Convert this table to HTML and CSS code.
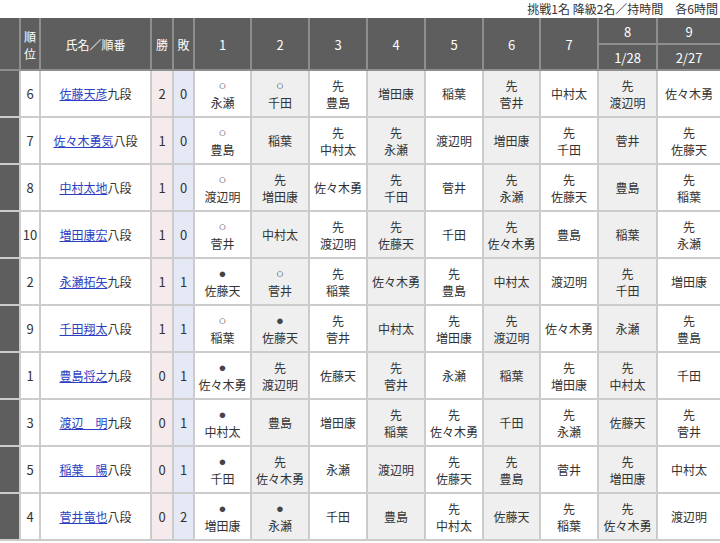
FILE: index.html
```html
<!DOCTYPE html>
<html lang="ja">
<head>
<meta charset="utf-8">
<link rel="stylesheet" href="styles.css">
</head>
<body>
<div class="note">挑戦1名 降級2名／持時間　各6時間</div>
<table class="league">
<colgroup>
<col class="c-side"><col class="c-rank"><col class="c-name"><col class="c-win"><col class="c-loss">
<col class="c-g57"><col class="c-g58"><col class="c-g58"><col class="c-g58"><col class="c-g58"><col class="c-g57"><col class="c-g58"><col class="c-g59"><col class="c-g9">
</colgroup>
<thead>
<tr class="h1">
<th rowspan="2" class="side"></th>
<th rowspan="2">順位</th>
<th rowspan="2">氏名／順番</th>
<th rowspan="2">勝</th>
<th rowspan="2">敗</th>
<th rowspan="2" class="num">1</th><th rowspan="2" class="num">2</th><th rowspan="2" class="num">3</th><th rowspan="2" class="num">4</th><th rowspan="2" class="num">5</th><th rowspan="2" class="num">6</th><th rowspan="2" class="num">7</th>
<th class="top num">8</th><th class="top num last">9</th>
</tr>
<tr class="h2"><th class="bot num">1/28</th><th class="bot num last">2/27</th></tr>
</thead>
<tbody>
<tr><td class="side"></td><td class="rank">6</td><td class="name"><a href="#">佐藤天彦</a>九段</td><td class="win">2</td><td class="loss">0</td>
<td><span class="mk">○</span><br>永瀬</td><td class="alt"><span class="mk">○</span><br>千田</td><td>先<br>豊島</td><td class="alt">増田康</td><td>稲葉</td><td class="alt">先<br>菅井</td><td>中村太</td><td class="alt">先<br>渡辺明</td><td class="last">佐々木勇</td></tr>
<tr><td class="side"></td><td class="rank">7</td><td class="name"><a href="#">佐々木勇気</a>八段</td><td class="win">1</td><td class="loss">0</td>
<td><span class="mk">○</span><br>豊島</td><td class="alt">稲葉</td><td>先<br>中村太</td><td class="alt">先<br>永瀬</td><td>渡辺明</td><td class="alt">増田康</td><td>先<br>千田</td><td class="alt">菅井</td><td class="last">先<br>佐藤天</td></tr>
<tr><td class="side"></td><td class="rank">8</td><td class="name"><a href="#">中村太地</a>八段</td><td class="win">1</td><td class="loss">0</td>
<td><span class="mk">○</span><br>渡辺明</td><td class="alt">先<br>増田康</td><td>佐々木勇</td><td class="alt">先<br>千田</td><td>菅井</td><td class="alt">先<br>永瀬</td><td>先<br>佐藤天</td><td class="alt">豊島</td><td class="last">先<br>稲葉</td></tr>
<tr><td class="side"></td><td class="rank">10</td><td class="name"><a href="#">増田康宏</a>八段</td><td class="win">1</td><td class="loss">0</td>
<td><span class="mk">○</span><br>菅井</td><td class="alt">中村太</td><td>先<br>渡辺明</td><td class="alt">先<br>佐藤天</td><td>千田</td><td class="alt">先<br>佐々木勇</td><td>豊島</td><td class="alt">稲葉</td><td class="last">先<br>永瀬</td></tr>
<tr><td class="side"></td><td class="rank">2</td><td class="name"><a href="#">永瀬拓矢</a>九段</td><td class="win">1</td><td class="loss">1</td>
<td><span class="mk">●</span><br>佐藤天</td><td class="alt"><span class="mk">○</span><br>菅井</td><td>先<br>稲葉</td><td class="alt">佐々木勇</td><td>先<br>豊島</td><td class="alt">中村太</td><td>渡辺明</td><td class="alt">先<br>千田</td><td class="last">増田康</td></tr>
<tr><td class="side"></td><td class="rank">9</td><td class="name"><a href="#">千田翔太</a>八段</td><td class="win">1</td><td class="loss">1</td>
<td><span class="mk">○</span><br>稲葉</td><td class="alt"><span class="mk">●</span><br>佐藤天</td><td>先<br>菅井</td><td class="alt">中村太</td><td>先<br>増田康</td><td class="alt">先<br>渡辺明</td><td>佐々木勇</td><td class="alt">永瀬</td><td class="last">先<br>豊島</td></tr>
<tr><td class="side"></td><td class="rank">1</td><td class="name"><a href="#">豊島将之</a>九段</td><td class="win">0</td><td class="loss">1</td>
<td><span class="mk">●</span><br>佐々木勇</td><td class="alt">先<br>渡辺明</td><td>佐藤天</td><td class="alt">先<br>菅井</td><td>永瀬</td><td class="alt">稲葉</td><td>先<br>増田康</td><td class="alt">先<br>中村太</td><td class="last">千田</td></tr>
<tr><td class="side"></td><td class="rank">3</td><td class="name"><a href="#">渡辺　明</a>九段</td><td class="win">0</td><td class="loss">1</td>
<td><span class="mk">●</span><br>中村太</td><td class="alt">豊島</td><td>増田康</td><td class="alt">先<br>稲葉</td><td>先<br>佐々木勇</td><td class="alt">千田</td><td>先<br>永瀬</td><td class="alt">佐藤天</td><td class="last">先<br>菅井</td></tr>
<tr><td class="side"></td><td class="rank">5</td><td class="name"><a href="#">稲葉　陽</a>八段</td><td class="win">0</td><td class="loss">1</td>
<td><span class="mk">●</span><br>千田</td><td class="alt">先<br>佐々木勇</td><td>永瀬</td><td class="alt">渡辺明</td><td>先<br>佐藤天</td><td class="alt">先<br>豊島</td><td>菅井</td><td class="alt">先<br>増田康</td><td class="last">中村太</td></tr>
<tr><td class="side"></td><td class="rank">4</td><td class="name"><a href="#">菅井竜也</a>八段</td><td class="win">0</td><td class="loss">2</td>
<td><span class="mk">●</span><br>増田康</td><td class="alt"><span class="mk">●</span><br>永瀬</td><td>千田</td><td class="alt">豊島</td><td>先<br>中村太</td><td class="alt">佐藤天</td><td>先<br>稲葉</td><td class="alt">先<br>佐々木勇</td><td class="last">渡辺明</td></tr>
</tbody>
</table>
</body>
</html>
```
FILE: styles.css
```css
html, body {
  margin: 0;
  padding: 0;
  background: #ffffff;
}
body {
  font-family: "Noto Sans CJK JP", "Noto Sans", sans-serif;
  font-size: 12px;
  color: #333333;
  width: 720px;
  overflow: hidden;
}
.note {
  height: 18px;
  line-height: 17px;
  text-align: right;
  padding-right: 2px;
  color: #333333;
  font-size: 12px;
}
.league {
  border-collapse: collapse;
  table-layout: fixed;
  width: 720px;
}
.c-side { width: 19px; }
.c-rank { width: 20px; }
.c-name { width: 111px; }
.c-win { width: 22px; }
.c-loss { width: 21px; }
.c-g57 { width: 57px; }
.c-g58 { width: 58px; }
.c-g59 { width: 59px; }
.c-g9 { width: 64px; }
.league th {
  background: #5e5e5e;
  color: #ffffff;
  font-weight: normal;
  border: 2px solid #8e8e8e;
  padding: 0;
  line-height: 17px;
  text-align: center;
}
.league th.num { font-size: 13px; }
.league th.top { height: 23px; }
.league th.bot { height: 24px; }
.league thead tr.h1 th { border-top-color: #5e5e5e; }
.league td {
  border: 2px solid #cccccc;
  padding: 0;
  height: 45px;
  line-height: 17px;
  text-align: center;
  vertical-align: middle;
  background: #ffffff;
}
.league td.side {
  background: #5e5e5e;
  border-left-color: #5e5e5e;
}
.league th.side {
  border-left-color: #5e5e5e;
}
.league .last {
  border-right-color: transparent;
}
.league td.rank { font-size: 13px; }
.league td.alt { background: #efefef; }
.league td.win { background: #f5eaec; font-size: 13px; }
.league td.loss { background: #e5e8f5; font-size: 13px; }
.league td.name { white-space: nowrap; }
.league a {
  color: #2b3fc2;
  text-decoration: underline;
}
.mk {
  font-family: "Liberation Sans", "DejaVu Sans", sans-serif;
  font-size: 13px;
  color: #444444;
}
```
